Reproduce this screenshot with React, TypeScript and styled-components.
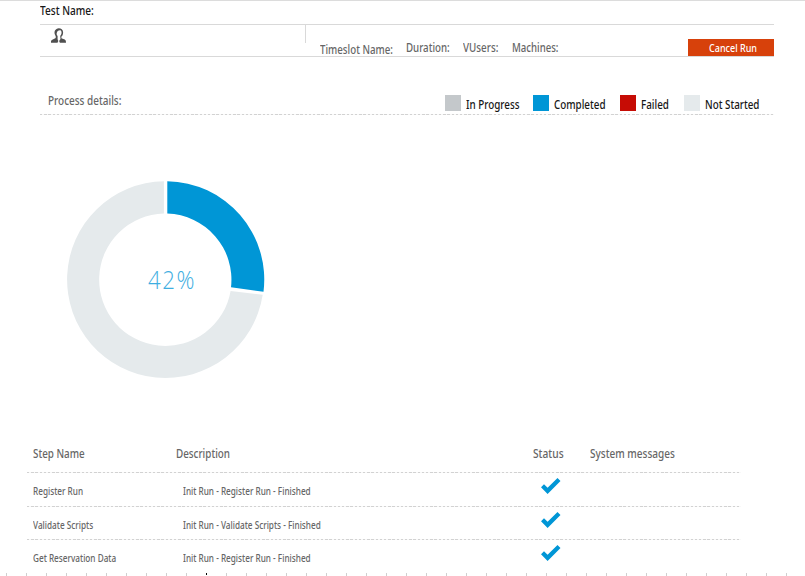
import React from "react";
import styled, { createGlobalStyle } from "styled-components";

const GlobalStyle = createGlobalStyle`
  html, body { margin: 0; background: #fff; }
  body { overflow: hidden; font-family: "Noto Sans", "Open Sans", sans-serif; }
  * { box-sizing: border-box; }
`;

const Page = styled.main`
  width: 805px;
  height: 576px;
  overflow: hidden;
  border-top: 1px solid #dcdcdc;
  display: flex;
  flex-direction: column;
`;

const CondensedBox = styled.span<{ $width: number; $size?: number; $color?: string }>`
  display: block;
  flex: none;
  width: ${p => p.$width}px;
  height: 16px;
  line-height: 16px;
  font-size: ${p => p.$size ?? 12}px;
  font-weight: 500;
  color: ${p => p.$color ?? "#666"};
  white-space: nowrap;
`;

const CondensedText = styled.span<{ $scale: number }>`
  display: inline-block;
  transform: scaleX(${p => p.$scale});
  transform-origin: 0 50%;
`;

type LabelProps = { children: string; width: number; scale?: number; size?: number; color?: string };

function Label({ children, width, scale = 0.82, size, color }: LabelProps) {
  return (
    <CondensedBox $width={width} $size={size} $color={color}>
      <CondensedText $scale={scale}>{children}</CondensedText>
    </CondensedBox>
  );
}

const TitleBar = styled.header`
  height: 23px;
  padding: 2px 0 0 40px;
`;

const InfoBar = styled.section`
  width: 734px;
  height: 33px;
  margin-left: 40px;
  border-top: 1px solid #d9d9d9;
  border-bottom: 1px solid #d9d9d9;
  display: flex;
`;

const Owner = styled.div`
  width: 266px;
  height: 18px;
  padding: 2px 0 0 11px;
  border-right: 1px solid #d9d9d9;
`;

const TimeslotInfo = styled.div`
  display: flex;
  padding: 15px 0 0 14px;
`;

const Field = styled.div<{ $gap?: number; $drop?: number }>`
  margin-right: ${p => p.$gap ?? 13}px;
  padding-top: ${p => p.$drop ?? 0}px;
`;

const CancelButton = styled.button`
  width: 86px;
  height: 17px;
  margin: 14px 0 0 auto;
  padding: 1px 0 0 21px;
  border: 0;
  background: #d7410b;
  font-family: inherit;
  text-align: left;
`;

const ProcessBar = styled.section`
  width: 734px;
  height: 57px;
  margin-left: 40px;
  padding: 36px 0 0 8px;
  display: flex;
`;

const Legend = styled.ul`
  display: flex;
  list-style: none;
  margin: 2px 0 0 auto;
  padding: 0;
`;

const LegendItem = styled.li`
  display: flex;
  margin-left: 14px;
  > span { margin-top: 2px; }
`;

const Swatch = styled.i<{ $color: string }>`
  width: 16px;
  height: 16px;
  margin-right: 5px;
  background: ${p => p.$color};
`;

const DashedRule = styled.hr<{ $width: number; $left: number }>`
  flex: none;
  width: ${p => p.$width}px;
  height: 1px;
  margin: 0 0 0 ${p => p.$left}px;
  border: 0;
  background: repeating-linear-gradient(90deg, #d2d2d2 0 2.4px, #f8f8f8 2.4px 4.2px);
`;

const ChartArea = styled.section`
  flex: none;
  height: 328px;
  padding: 65px 0 0 66px;
`;

const Donut = styled.div`
  display: grid;
  width: 200px;
  height: 200px;
  > * { grid-area: 1 / 1; }
`;

const Percent = styled.strong`
  align-self: center;
  width: 60px;
  margin: 0 0 3px 82px;
  font: 300 25px/30px "Open Sans", "Noto Sans", sans-serif;
  letter-spacing: 1.8px;
  color: #3eaee1;
  white-space: nowrap;
  transform: scaleX(.89);
  transform-origin: 0 50%;
`;

const StepRow = styled.div<{ $height: number; $top: number }>`
  flex: none;
  display: grid;
  grid-template-columns: 143px 357px 57px 160px;
  height: ${p => p.$height}px;
  padding: ${p => p.$top}px 0 0 33px;
`;

const Description = styled.div`
  padding-left: 7px;
`;

const StatusCell = styled.div`
  padding-left: 8px;
  margin-top: -5px;
  svg { display: block; }
`;

const Ruler = styled.div`
  flex: none;
  display: grid;
  grid-template-columns: repeat(40, 20px);
  height: 3px;
  margin-left: 6px;
`;

const Tick = styled.i<{ $active: boolean }>`
  width: 1px;
  height: 3px;
  background: ${p => (p.$active ? "linear-gradient(#000 2px, #fff 2px)" : "#cfcfcf")};
`;

const statuses = [
  { name: "In Progress", color: "#c4c8cb", width: 53 },
  { name: "Completed", color: "#0096d6", width: 52 },
  { name: "Failed", color: "#c60c05", width: 29 },
  { name: "Not Started", color: "#e5eaec", width: 69 },
];

const steps = [
  { name: "Register Run", description: "Init Run - Register Run - Finished", height: 33 },
  { name: "Validate Scripts", description: "Init Run - Validate Scripts - Finished", height: 32 },
  { name: "Get Reservation Data", description: "Init Run - Register Run - Finished", height: 33 },
];

function PersonIcon() {
  return (
    <svg width="15" height="16" viewBox="0 0 15 16" fill="none">
      <path d="M4.7 10V8C3 6 3 2.2 5.5 .9C8.2-.5 12.2 .8 12.1 4.4C12.1 6.4 11.5 7.7 10.4 8.6V10.2L13.7 11.5C14.6 12 15 12.8 15 14.8H8.9L8.1 13.1L9.5 11L9.2 7.8C10.6 6.5 11 3.8 10 2.7C8.9 1.7 6.5 2.6 5.9 4.4C5.3 6.3 5.9 7.5 6.6 8V11.2L7.3 13L6.5 14.8H0V13.1C.2 12 3.1 11.2 4.7 10Z" fill="#505050" />
    </svg>
  );
}

function CheckIcon() {
  return (
    <svg width="20" height="17" viewBox="0 0 20 17" fill="#0096d6">
      <path d="M0 9.2L3 6.3L6.6 9.8L16.5 0L19.5 2.9L6.6 16Z" />
    </svg>
  );
}

export default function App() {
  return (
    <>
      <GlobalStyle />
      <Page>
        <TitleBar><Label width={60} scale={0.84} color="#161616">Test Name:</Label></TitleBar>
        <InfoBar>
          <Owner><PersonIcon /></Owner>
          <TimeslotInfo>
            <Field $drop={2}><Label width={73} scale={0.81}>Timeslot Name:</Label></Field>
            <Field><Label width={43.5} scale={0.81}>Duration:</Label></Field>
            <Field><Label width={36}>VUsers:</Label></Field>
            <Field><Label width={47} scale={0.8}>Machines:</Label></Field>
          </TimeslotInfo>
          <CancelButton><Label width={60} size={11} color="#fff">Cancel Run</Label></CancelButton>
        </InfoBar>
        <ProcessBar>
          <Label width={75} scale={0.83}>Process details:</Label>
          <Legend>
            {statuses.map(s => (
              <LegendItem key={s.name}>
                <Swatch $color={s.color} />
                <Label width={s.width} color="#161616">{s.name}</Label>
              </LegendItem>
            ))}
          </Legend>
        </ProcessBar>
        <DashedRule $width={734} $left={40} />
        <ChartArea>
          <Donut>
            <svg width="200" height="200" viewBox="66 180 200 200">
              <path d="M167.3 181.2A98.4 98.4 0 0 1 263.5 291.8L231 287.2A66.2 66.2 0 0 0 167.3 213.5Z" fill="#0096d6" />
              <path d="M163.9 181.2A98.4 98.4 0 1 0 262.7 294.8L230.6 290.9A66.2 66.2 0 1 1 163.9 213.5Z" fill="#e5eaec" />
            </svg>
            <Percent>42%</Percent>
          </Donut>
        </ChartArea>
        <StepRow $height={29} $top={3}>
          <Label width={70}>Step Name</Label>
          <Label width={70}>Description</Label>
          <Label width={40} scale={0.85}>Status</Label>
          <Label width={100} scale={0.835}>System messages</Label>
        </StepRow>
        {steps.map(step => (
          <React.Fragment key={step.name}>
            <DashedRule $width={714} $left={27} />
            <StepRow $height={step.height} $top={10}>
              <Label width={100} size={10}>{step.name}</Label>
              <Description><Label width={160} size={10}>{step.description}</Label></Description>
              <StatusCell><CheckIcon /></StatusCell>
            </StepRow>
          </React.Fragment>
        ))}
        <Ruler>
          {Array.from({ length: 40 }, (_, i) => <Tick key={i} $active={i === 10} />)}
        </Ruler>
      </Page>
    </>
  );
}
